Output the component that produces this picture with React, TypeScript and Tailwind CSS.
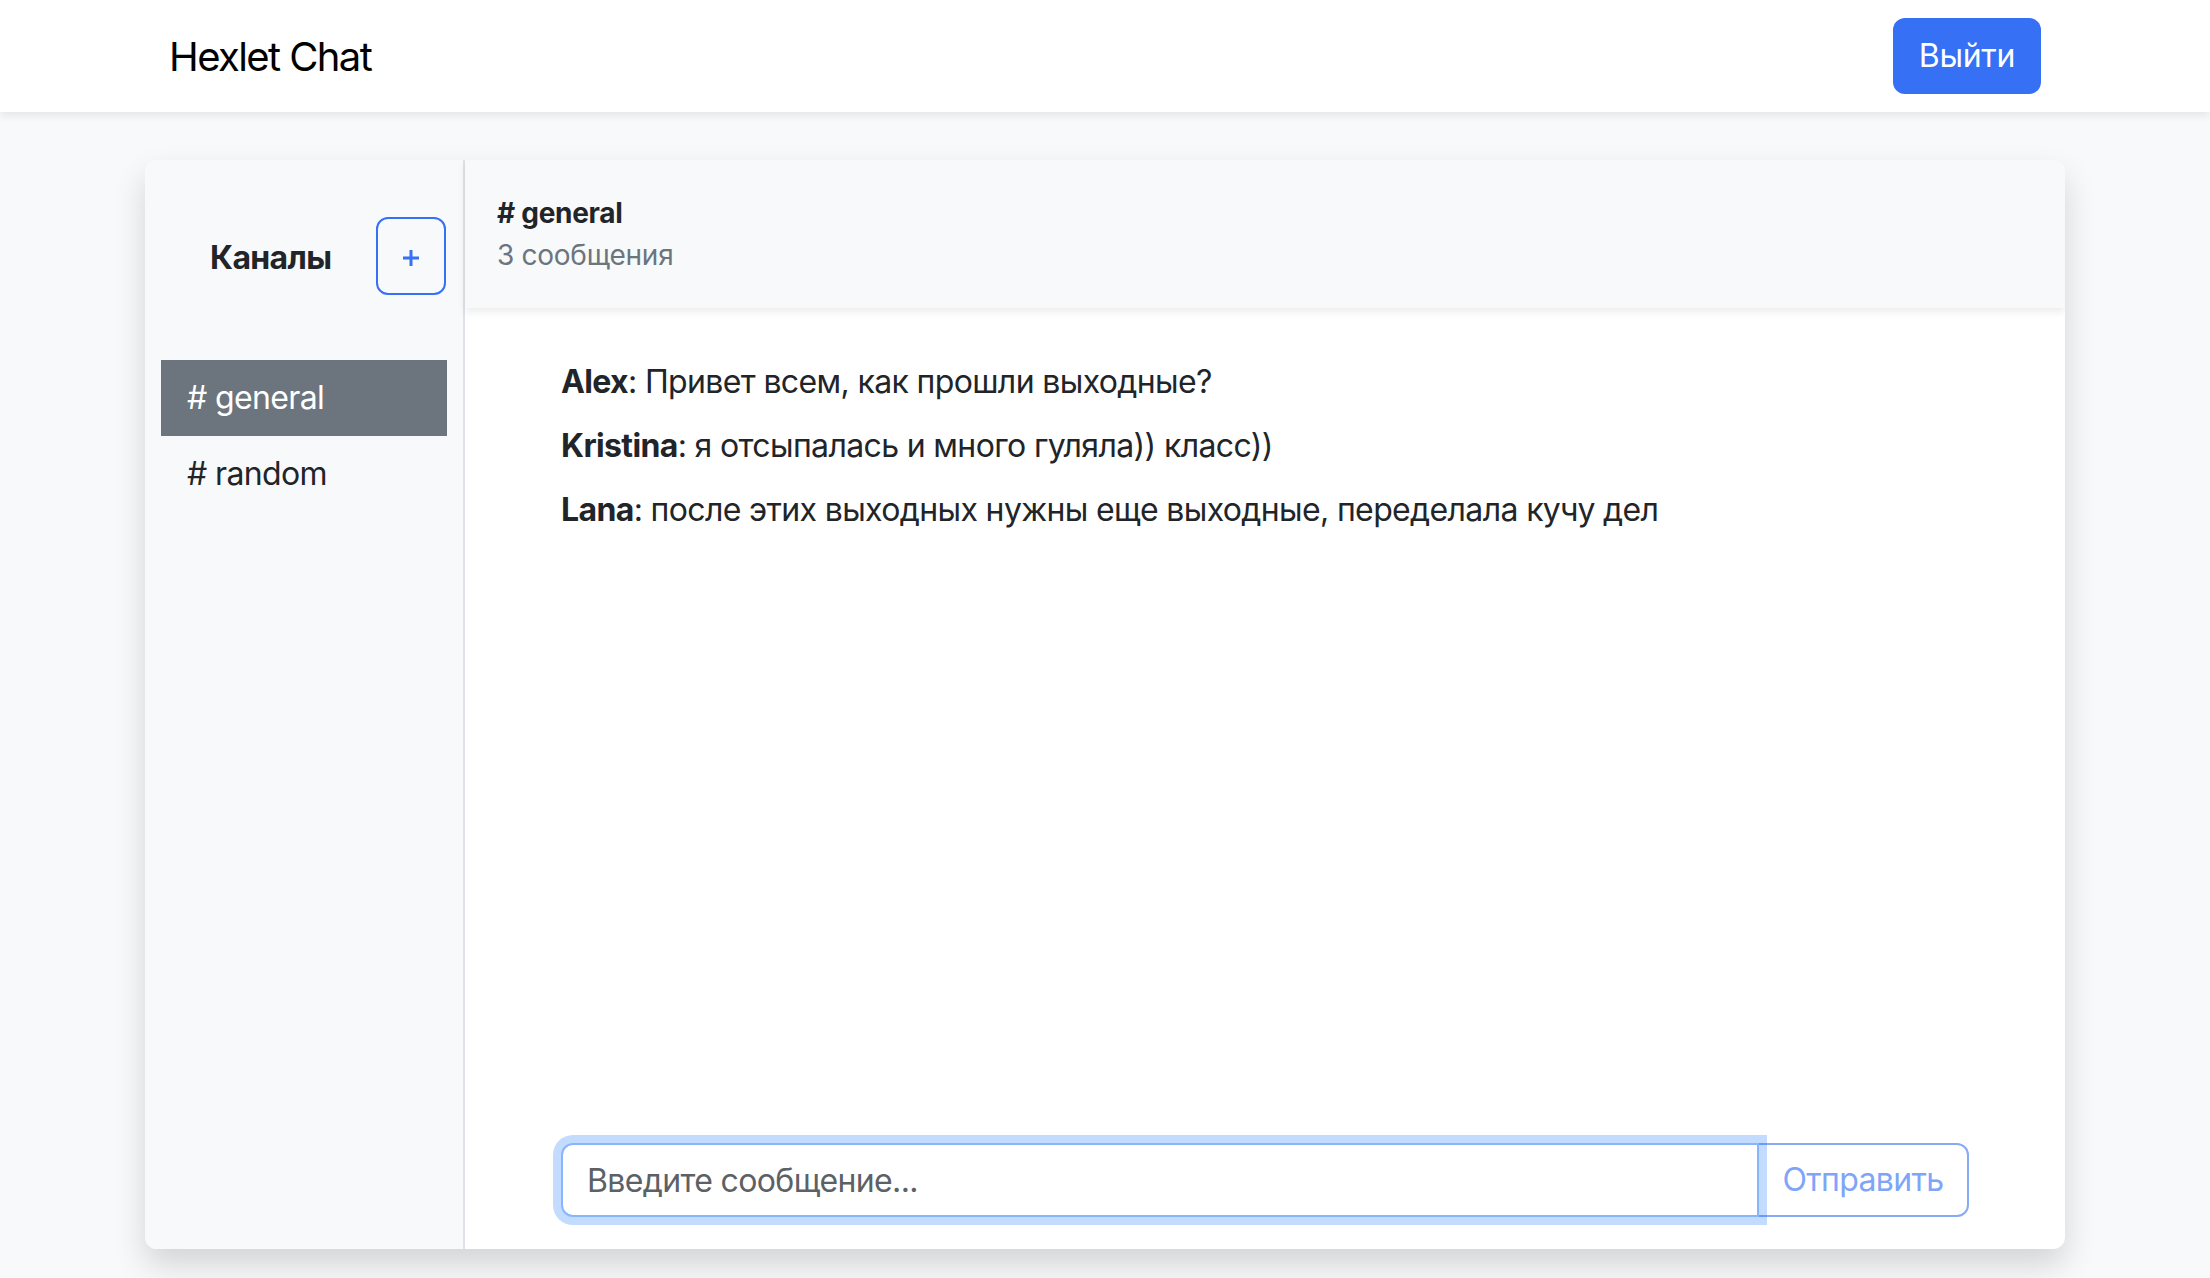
import React from "react";

export default function App() {
  return (
    <div
      className="h-screen w-full overflow-hidden bg-[#f8f9fa] flex flex-col text-[#212529]"
      style={{ fontFamily: "Inter, 'Noto Sans', sans-serif" }}
    >
      <nav className="h-[112px] shrink-0 bg-white shadow-[0_4px_8px_rgba(0,0,0,0.075)] relative z-10">
        <div className="w-[1920px] mx-auto h-full flex items-center justify-between px-[24px]">
          <a className="text-[40px] leading-[60px] text-black tracking-[-0.04em] mt-[2px]">Hexlet Chat</a>
          <button className="h-[76px] px-[26px] rounded-[12px] bg-[#3570f5] text-white text-[32px] leading-[48px] tracking-[-0.01em]">
            Выйти
          </button>
        </div>
      </nav>
      <main className="flex-1 pt-[48px]">
        <div className="w-[1920px] mx-auto h-[1089px] rounded-[12px] overflow-hidden shadow-[0_16px_32px_rgba(0,0,0,0.15)] bg-white flex">
          <aside className="w-[320px] shrink-0 bg-[#f8f9fa] border-r-[2px] border-[#dee2e6] flex flex-col">
            <div className="flex items-center justify-between mt-[9px] mb-[16px] pl-[65px] pr-[17px] pt-[48px] pb-[49px]">
              <b className="text-[32px] leading-[48px] font-bold tracking-[-0.02em] mt-[3px]">Каналы</b>
              <button className="w-[70px] h-[78px] rounded-[12px] border-[2px] border-[#3570f5] text-[#3570f5] flex items-center justify-center">
                <svg width="18" height="18" viewBox="0 0 18 18" className="mt-[4px]">
                  <path d="M9 1v16M1 9h16" stroke="#3570f5" strokeWidth="3" />
                </svg>
              </button>
            </div>
            <ul className="px-[16px] flex flex-col text-[32px] leading-[48px] tracking-[-0.02em]">
              <li>
                <button className="w-full h-[76px] text-left px-[26px] bg-[#6c757d] text-white">
                  # general
                </button>
              </li>
              <li>
                <button className="w-full h-[76px] text-left px-[26px] text-[#212529]">
                  # random
                </button>
              </li>
            </ul>
          </aside>
          <section className="flex-1 flex flex-col h-full">
            <div className="bg-[#f8f9fa] p-[32px] shadow-[0_4px_8px_rgba(0,0,0,0.075)] text-[28px] leading-[42px] tracking-[-0.01em] relative z-10">
              <p className="font-bold">
                # general
              </p>
              <span className="text-[#6c757d]">3 сообщения</span>
            </div>
            <div className="flex-1 px-[96px] pt-[50px] text-[32px] leading-[48px] tracking-[-0.02em]">
              <div className="mb-[16px]">
                <b>Alex</b>: Привет всем, как прошли выходные?
              </div>
              <div className="mb-[16px]">
                <b>Kristina</b>: я отсыпалась и много гуляла)) класс))
              </div>
              <div className="mb-[16px]">
                <b>Lana</b>: после этих выходных нужны еще выходные, переделала кучу дел
              </div>
            </div>
            <div className="px-[96px] pb-[32px]">
              <form className="flex h-[74px]" onSubmit={(e) => e.preventDefault()}>
                <input
                  aria-label="Новое сообщение"
                  placeholder="Введите сообщение..."
                  className="flex-1 h-full rounded-l-[12px] border-[2px] border-[#86b7fe] shadow-[0_0_0_8px_rgba(13,110,253,0.25)] px-[24px] text-[32px] tracking-[-0.02em] outline-none placeholder:text-[#5c6166] bg-white relative z-10"
                />
                <button
                  type="submit"
                  disabled
                  className="w-[210px] h-full rounded-r-[12px] border-[2px] border-l-0 border-[#86a9f8] text-[#7fa5f8] text-[32px] tracking-[-0.02em] bg-white"
                >
                  Отправить
                </button>
              </form>
            </div>
          </section>
        </div>
      </main>
    </div>
  );
}
